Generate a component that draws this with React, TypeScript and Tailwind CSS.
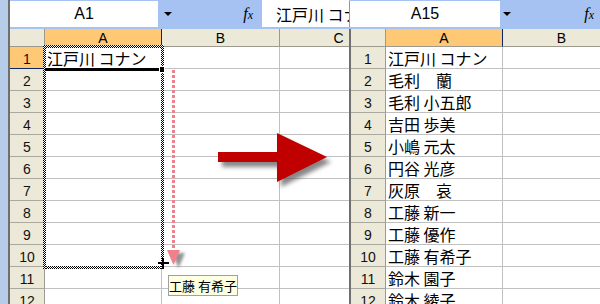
import React from 'react'

const names = [
  '江戸川 コナン',
  '毛利　蘭',
  '毛利 小五郎',
  '吉田 歩美',
  '小嶋 元太',
  '円谷 光彦',
  '灰原　哀',
  '工藤 新一',
  '工藤 優作',
  '工藤 有希子',
  '鈴木 園子',
  '鈴木 綾子',
]

const rows = [1, 2, 3, 4, 5, 6, 7, 8, 9, 10, 11, 12]

const jp = "font-['Noto_Sans_CJK_JP',sans-serif]"
const ants = 'absolute bg-[repeating-conic-gradient(#000_0_25%,#fff_0_50%)] bg-size-[2px_2px]'

const DropArrow = () => (
  <div className="w-0 h-0 border-l-[4px] border-r-[4px] border-t-[4px] border-l-transparent border-r-transparent border-t-black" />
)

const Fx = () => (
  <span className="font-['Liberation_Serif',serif] italic text-[16px] leading-none text-black">
    f<span className="text-[12px]">x</span>
  </span>
)

const App = () => {
  return (
    <div className="relative w-[600px] h-[304px] overflow-hidden bg-white flex font-['Liberation_Sans',Arial,sans-serif]">
      {/* left sheet */}
      <div className="flex w-[349px] shrink-0">
        <div className="w-[10px] shrink-0 bg-[#b7cce9] border-r-2 border-[#6f6f6f]" />
        <div className="flex flex-col w-[339px] overflow-hidden">
          <div className="h-[29px] shrink-0 bg-[#a6c2f2] flex items-start pt-[1px]">
            <div className="w-[148px] h-[26px] bg-white flex items-center justify-center text-[16px] text-black">A1</div>
            <div className="w-[20px] h-[26px] flex items-center justify-center"><DropArrow /></div>
            <div className="w-[84px] h-[26px] flex items-center justify-end pr-[9px]"><Fx /></div>
            <div className={`flex-1 h-[27px] -mt-[1px] bg-white flex items-center pl-[14px] text-[16px] whitespace-nowrap overflow-hidden ${jp}`}>江戸川 コナン</div>
          </div>

          <div className="flex h-[18px] shrink-0 text-[14px] leading-none">
            <div className="w-[35px] shrink-0 bg-[#ece9d8] border-r border-b border-[#9c9a8e]" />
            <div className="w-[117px] shrink-0 bg-[#ffc875] border-r border-r-[#0a246a] border-b border-b-[#9c9a8e] flex items-center justify-center">A</div>
            <div className="w-[118px] shrink-0 bg-[#ece9d8] border-r border-b border-[#9c9a8e] flex items-center justify-center">B</div>
            <div className="w-[118px] shrink-0 bg-[#ece9d8] border-r border-b border-[#9c9a8e] flex items-center justify-center">C</div>
          </div>

          {rows.map((n) => (
            <div key={n} className="flex h-[22px] shrink-0">
              <div className={`w-[35px] shrink-0 border-r border-[#9c9a8e] border-b flex items-end justify-center pb-[2px] text-[14px] leading-none text-[#111] ${n === 1 ? 'bg-[#ffc875] border-b-[#0a246a]' : 'bg-[#ece9d8] border-b-[#a9a9a0]'}`}>{n}</div>
              <div className={`w-[117px] shrink-0 border-r border-b border-[#c0c0c0] flex items-end pl-[2px] pb-[2px] text-[16px] leading-none whitespace-nowrap ${jp}`}>{n === 1 ? names[0] : ''}</div>
              <div className="w-[118px] shrink-0 border-r border-b border-[#c0c0c0]" />
              <div className="w-[118px] shrink-0 border-r border-b border-[#c0c0c0]" />
            </div>
          ))}
        </div>
      </div>

      {/* right sheet */}
      <div className="flex flex-col w-[251px] shrink-0 overflow-hidden">
        <div className="h-[29px] shrink-0 bg-[#a6c2f2] flex items-start pt-[1px]">
          <div className="w-[151px] h-[26px] bg-white border-l border-[#7f9db9] flex items-center justify-center text-[16px] text-black">A15</div>
          <div className="w-[14px] h-[26px] flex items-center justify-center"><DropArrow /></div>
          <div className="flex-1 h-[26px] flex items-center justify-end pr-[6px]"><Fx /></div>
        </div>

        <div className="flex h-[18px] shrink-0 text-[14px] leading-none border-l-2 border-[#6f6f6f]">
          <div className="w-[35px] shrink-0 bg-[#ece9d8] border-r border-b border-[#9c9a8e]" />
          <div className="w-[117px] shrink-0 bg-[#ffc875] border-r border-r-[#0a246a] border-b border-b-[#9c9a8e] flex items-center justify-center">A</div>
          <div className="w-[118px] shrink-0 bg-[#ece9d8] border-r border-b border-[#9c9a8e] flex items-center justify-center">B</div>
        </div>

        {rows.map((n) => (
          <div key={n} className="flex h-[22px] shrink-0 border-l-2 border-[#6f6f6f]">
            <div className="w-[35px] shrink-0 bg-[#ece9d8] border-r border-r-[#9c9a8e] border-b border-b-[#a9a9a0] flex items-end justify-center pb-[2px] text-[14px] leading-none text-[#111]">{n}</div>
            <div className={`w-[117px] shrink-0 border-r border-b border-[#c0c0c0] flex items-end pl-[2px] pb-[2px] text-[16px] leading-none whitespace-nowrap ${jp}`}>{names[n - 1]}</div>
            <div className="w-[118px] shrink-0 border-r border-b border-[#c0c0c0]" />
          </div>
        ))}
      </div>

      {/* copy selection marching ants */}
      <div className={`${ants} left-[43px] top-[45px] w-[121px] h-[3px]`} />
      <div className={`${ants} left-[43px] top-[266px] w-[121px] h-[3px]`} />
      <div className={`${ants} left-[43px] top-[45px] w-[3px] h-[224px]`} />
      <div className={`${ants} left-[161px] top-[45px] w-[3px] h-[224px]`} />

      {/* active cell bottom edge + fill handle */}
      <div className="absolute left-[45px] top-[68px] w-[114px] h-[3px] bg-black" />
      <div className="absolute left-[159px] top-[66px] w-[6px] h-[7px] bg-black border border-white" />

      {/* drag arrow */}
      <svg className="absolute left-[160px] top-[64px]" width="32" height="210">
        <defs>
          <filter id="pk" x="-50%" y="-50%" width="200%" height="200%">
            <feGaussianBlur stdDeviation="1.5" />
          </filter>
        </defs>
        <line x1="19" y1="6" x2="19" y2="186" stroke="#9a9a9a" strokeWidth="3" filter="url(#pk)" opacity="0.6" />
        <polygon points="12,189 25,189 18.5,204" fill="#777" filter="url(#pk)" opacity="0.8" />
        <line x1="13.5" y1="6" x2="13.5" y2="186" stroke="#f0808a" strokeWidth="3" strokeDasharray="3 2" />
        <polygon points="7,186 20,186 13.5,201" fill="#f0808a" />
      </svg>

      {/* plus cursor */}
      <div className="absolute left-[158px] top-[262px] w-[11px] h-[2px] bg-black" />
      <div className="absolute left-[162px] top-[258px] w-[2px] h-[11px] bg-black" />

      {/* tooltip */}
      <div className={`absolute left-[168px] top-[275px] w-[70px] h-[21px] bg-[#ffffe1] border border-[#a0a0a0] flex items-center justify-center text-[13px] leading-none text-black whitespace-nowrap ${jp}`}>
        工藤 有希子
      </div>

      {/* big red arrow */}
      <svg className="absolute left-[210px] top-[125px]" width="130" height="70">
        <defs>
          <filter id="rd" x="-20%" y="-30%" width="140%" height="160%">
            <feGaussianBlur stdDeviation="2" />
          </filter>
        </defs>
        <polygon points="12,32 71,32 71,13 121,37 71,62 71,42 12,42" fill="#555" opacity="0.7" filter="url(#rd)" />
        <polygon points="8,27 67,27 67,8 117,32 67,57 67,37 8,37" fill="#c00000" />
      </svg>
    </div>
  )
}

export default App
